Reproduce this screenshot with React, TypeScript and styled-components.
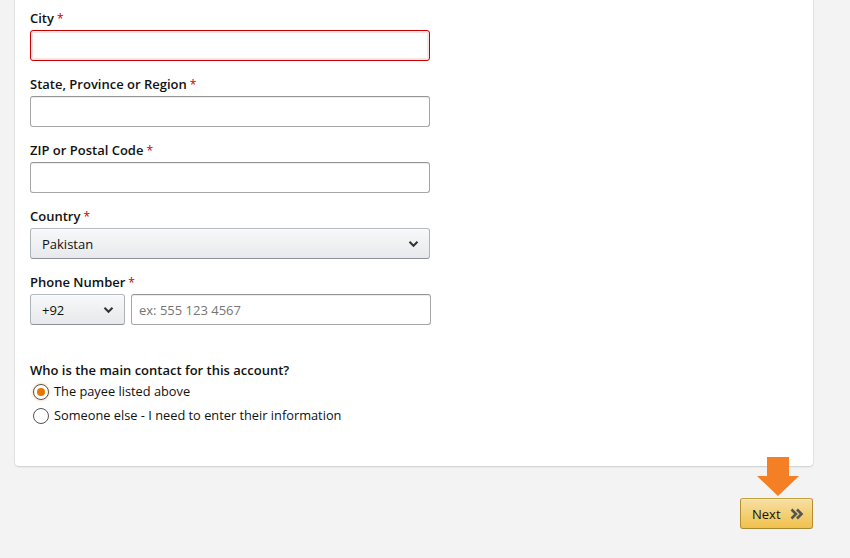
import styled, { createGlobalStyle } from "styled-components";

const GlobalStyle = createGlobalStyle`
  html, body {
    margin: 0;
    padding: 0;
    background: #f3f3f3;
  }
  body {
    font-family: "Open Sans", "Liberation Sans", Arial, sans-serif;
    color: #111;
    font-size: 13px;
  }
`;

const Page = styled.div`
  width: 850px;
  height: 558px;
  overflow: hidden;
  box-sizing: border-box;
  padding-left: 15px;
`;

const Card = styled.div`
  width: 798px;
  box-sizing: border-box;
  background: #fff;
  border-radius: 0 0 4px 4px;
  box-shadow: 0 1px 2px rgba(0, 0, 0, 0.12), 0 0 0 1px rgba(0, 0, 0, 0.04);
  padding: 9px 15px 41px 15px;
`;

const Field = styled.div`
  width: 400px;
  margin-bottom: 14px;
`;

const Label = styled.label`
  display: block;
  font-weight: 600;
  font-size: 13px;
  line-height: 19px;
  margin-bottom: 2px;
`;

const Star = styled.span`
  color: #c40000;
  font-weight: 400;
  font-size: 12px;
  margin-left: 3px;
`;

const TextInput = styled.input<{ $error?: boolean }>`
  display: block;
  width: 400px;
  height: 31px;
  box-sizing: border-box;
  border: 1px solid ${(p) => (p.$error ? "#c40000" : "#a6a6a6")};
  border-top-color: ${(p) => (p.$error ? "#c40000" : "#949494")};
  border-radius: 3px;
  box-shadow: ${(p) =>
    p.$error
      ? "inset 0 0 0 2px rgba(221, 0, 0, 0.1)"
      : "0 1px 0 rgba(255,255,255,.5), 0 1px 0 rgba(0,0,0,.07) inset"};
  padding: 0 7px;
  font-family: inherit;
  font-size: 13px;
  color: #111;
  outline: none;
  &::placeholder {
    color: #767676;
  }
`;

const SelectBox = styled.div<{ $width: number }>`
  display: flex;
  align-items: center;
  justify-content: space-between;
  width: ${(p) => p.$width}px;
  height: 31px;
  box-sizing: border-box;
  padding: 0 10px 0 11px;
  border: 1px solid #adb1b8;
  border-top-color: #b5b9c0;
  border-bottom-color: #8d9096;
  border-radius: 3px;
  background: linear-gradient(to bottom, #f7f8fa, #e7e9ec);
  box-shadow: 0 1px 0 rgba(255, 255, 255, 0.6) inset;
  font-size: 13px;
  color: #111;
  flex-shrink: 0;
`;

const Chevron = () => (
  <svg width="11" height="8" viewBox="0 0 11 8">
    <path d="M1.5 1.8 L5.5 5.8 L9.5 1.8" fill="none" stroke="#333" strokeWidth="2" />
  </svg>
);

const PhoneRow = styled.div`
  display: flex;
  gap: 6px;
  width: 401px;
`;

const PhoneInput = styled(TextInput)`
  width: 300px;
`;

const Question = styled.div`
  margin-top: 36px;
  font-weight: 600;
  font-size: 13px;
  line-height: 19px;
`;

const RadioList = styled.div`
  display: flex;
  flex-direction: column;
  gap: 5px;
  margin-top: 2px;
`;

const RadioRow = styled.label`
  display: flex;
  align-items: center;
  gap: 5px;
  padding-left: 3px;
  line-height: 19px;
  font-size: 12.8px;
  color: #111;
`;

const RadioDot = styled.span<{ $checked?: boolean }>`
  width: 16px;
  height: 16px;
  box-sizing: border-box;
  border-radius: 50%;
  border: 1px solid #555;
  background: #fff;
  box-shadow: ${(p) => (p.$checked ? "0 0 2px 1px rgba(228, 121, 17, 0.25)" : "none")};
  display: flex;
  align-items: center;
  justify-content: center;
  &::after {
    content: "";
    display: ${(p) => (p.$checked ? "block" : "none")};
    width: 8px;
    height: 8px;
    border-radius: 50%;
    background: #e77600;
  }
`;

const Footer = styled.div`
  width: 798px;
  display: flex;
  justify-content: flex-end;
  margin-top: 32px;
`;

const ButtonWrap = styled.div`
  position: relative;
`;

const NextButton = styled.button`
  display: flex;
  align-items: center;
  gap: 9px;
  width: 73px;
  height: 31px;
  box-sizing: border-box;
  padding: 0 0 0 11px;
  border: 1px solid;
  border-color: #c89f3a #b48d2e #a88734;
  border-radius: 3px;
  background: linear-gradient(to bottom, #f7dfa5, #f0c14b);
  box-shadow: 0 1px 0 rgba(255, 255, 255, 0.4) inset;
  font-family: inherit;
  font-size: 13px;
  color: #111;
  cursor: pointer;
`;

const Arrow = styled.svg`
  position: absolute;
  left: 17px;
  top: -41px;
`;

const fields = ["City", "State, Province or Region", "ZIP or Postal Code"];

export default function App() {
  return (
    <>
      <GlobalStyle />
      <Page>
        <Card>
          {fields.map((f, i) => (
            <Field key={f}>
              <Label>
                {f}
                <Star>*</Star>
              </Label>
              <TextInput $error={i === 0} />
            </Field>
          ))}
          <Field>
            <Label>
              Country<Star>*</Star>
            </Label>
            <SelectBox $width={400}>
              <span>Pakistan</span>
              <Chevron />
            </SelectBox>
          </Field>
          <Field>
            <Label>
              Phone Number<Star>*</Star>
            </Label>
            <PhoneRow>
              <SelectBox $width={95}>
                <span>+92</span>
                <Chevron />
              </SelectBox>
              <PhoneInput placeholder="ex: 555 123 4567" />
            </PhoneRow>
          </Field>
          <Question>Who is the main contact for this account?</Question>
          <RadioList>
            <RadioRow>
              <RadioDot $checked />
              The payee listed above
            </RadioRow>
            <RadioRow>
              <RadioDot />
              Someone else - I need to enter their information
            </RadioRow>
          </RadioList>
        </Card>
        <Footer>
          <ButtonWrap>
            <Arrow width="42" height="40" viewBox="0 0 42 40">
              <path d="M10 0 H32 V19 H42 L21 39 L0 19 H10 Z" fill="#f47f24" />
            </Arrow>
            <NextButton>
              Next
              <svg width="14" height="12" viewBox="0 0 14 12">
                <path
                  d="M1.5 1.5 L6 6 L1.5 10.5 M7 1.5 L11.5 6 L7 10.5"
                  fill="none"
                  stroke="#555"
                  strokeWidth="2.6"
                />
              </svg>
            </NextButton>
          </ButtonWrap>
        </Footer>
      </Page>
    </>
  );
}
